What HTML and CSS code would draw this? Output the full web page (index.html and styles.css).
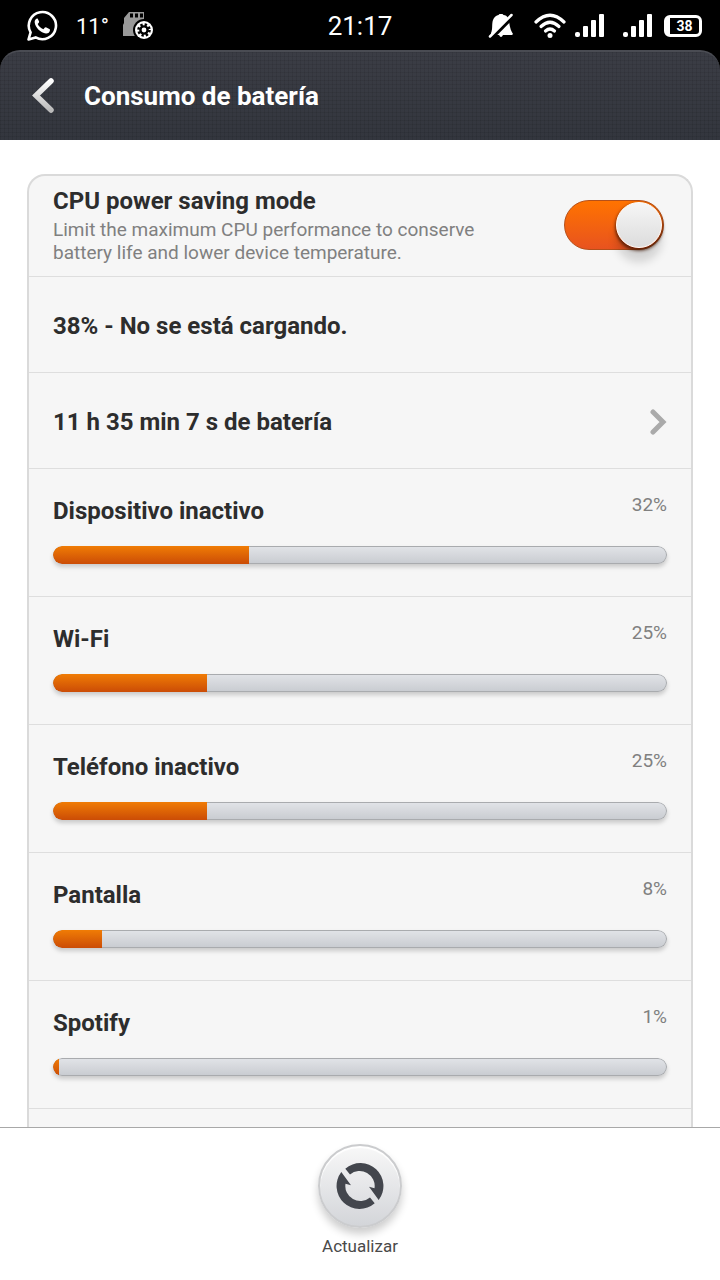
FILE: index.html
```html
<!DOCTYPE html>
<html lang="es">
<head>
    <meta charset="UTF-8">
    <meta name="viewport" content="width=device-width, initial-scale=1.0">
    <title>Consumo de batería</title>
    <link rel="stylesheet" href="styles.css">
</head>
<body>
    <div class="top">
        <div class="status">
            <div class="status-left">
                <svg width="32" height="32" viewBox="0 0 32 32">
                    <path d="M2.500 29.500 L4.600 22.400 A13.600 13.600 0 1 1 9.600 27.400 Z" fill="none" stroke="#fff" stroke-width="2.600" stroke-linejoin="round"/>
                    <path d="M11 8.500c-1.500.5-2.500 2-2.300 4 .6 5 6 10.500 11.300 11 2 .1 3.800-1.200 4-3.300l-.2-1-3.900-2-1 .2-1.500 1.900c-2.700-1-4.600-2.900-5.700-5.200l1.300-1.700.1-.9-1.500-3z" fill="#fff"/>
                </svg>
                <span class="temp">11°</span>
                <svg width="32" height="30" viewBox="0 0 32 30">
                    <path d="M7 1h15v24H1V14l1-2V7z" fill="#999"/>
                    <path d="M8 2.500h3v4H8zM13 2.500h3v4h-3zM18 2.500h3v4h-3z" fill="#000"/>
                    <circle cx="22" cy="19" r="11" fill="#000"/>
                    <circle cx="22" cy="19" r="9" fill="#fff"/>
                    <circle cx="22" cy="19" r="5.500" fill="none" stroke="#000" stroke-width="2.600" stroke-dasharray="2.300 2.020"/>
                    <circle cx="22" cy="19" r="3.600" fill="none" stroke="#000" stroke-width="2.400"/>
                </svg>
            </div>
            <time class="clock">21:17</time>
            <div class="status-right">
                <svg width="26" height="26" viewBox="0 0 26 26">
                    <path d="M3 20 C5 16 3.500 11 5 7 C6 4 8.500 2.500 10.500 2 L11.500 1 H14.500 L15.500 2 C17.500 2.300 19 3 20 5 C22 10 21 15 25 21 L24 22 H15 Q13 26 11 22 H3 Z" fill="#fff"/>
                    <path d="M2.500 26 L26 2.500" stroke="#000" stroke-width="4"/>
                    <path d="M2 23.500 L23.500 2" stroke="#fff" stroke-width="2.500" stroke-linecap="round"/>
                </svg>
                <svg class="wifi" width="32" height="26" viewBox="0 0 32 26" fill="none" stroke="#fff" stroke-width="3.200" stroke-linecap="round">
                    <path d="M2 9 Q16 -4.500 30 9"/>
                    <path d="M7 13.500 Q16 5 25 13.500"/>
                    <path d="M11.500 18 Q16 14 20.500 18"/>
                    <circle cx="16" cy="22.500" r="2.500" fill="#fff" stroke="none"/>
                </svg>
                <svg width="30" height="24" viewBox="0 0 30 24" fill="#fff">
                    <rect x="1" y="18" width="5" height="5" rx="2"/>
                    <rect x="9" y="12" width="5" height="11" rx="1"/>
                    <rect x="17" y="6" width="5" height="17" rx="1"/>
                    <rect x="25" y="0" width="5" height="23" rx="1"/>
                </svg>
                <svg class="second" width="30" height="24" viewBox="0 0 30 24" fill="#fff">
                    <rect x="1" y="18" width="5" height="5" rx="2"/>
                    <rect x="9" y="12" width="5" height="11" rx="1"/>
                    <rect x="17" y="6" width="5" height="17" rx="1"/>
                    <rect x="25" y="0" width="5" height="23" rx="1"/>
                </svg>
                <span class="battery">38</span>
            </div>
        </div>

        <header class="header">
            <button class="back" type="button" aria-label="Atrás">
                <svg width="24" height="38" viewBox="0 0 24 38">
                    <defs>
                        <linearGradient id="arrow" x1="0" y1="0" x2="0" y2="1">
                            <stop offset="0" stop-color="#fff"/>
                            <stop offset="1" stop-color="#bbb"/>
                        </linearGradient>
                    </defs>
                    <path d="M21 4 L6 18.500 L21 33" fill="none" stroke="url(#arrow)" stroke-width="5.500" stroke-linecap="round"/>
                </svg>
            </button>
            <h1>Consumo de batería</h1>
        </header>
    </div>

    <main class="content">
        <div class="card">
            <div class="row row-cpu">
                <label for="cpu">
                    <span class="name">CPU power saving mode</span>
                    <span class="note">Limit the maximum CPU performance to conserve battery life and lower device temperature.</span>
                </label>
                <input class="switch" type="checkbox" id="cpu" checked>
            </div>
            <div class="row">
                <span class="name">38% - No se está cargando.</span>
            </div>
            <a class="row" href="#">
                <span class="name">11 h 35 min 7 s de batería</span>
                <svg width="18" height="26" viewBox="0 0 18 26">
                    <path d="M4 3 L14 13 L4 23" fill="none" stroke="#aaa" stroke-width="5" stroke-linecap="round"/>
                </svg>
            </a>
            <div class="usage">
                <div class="usage-top">
                    <label class="name" for="p1">Dispositivo inactivo</label>
                    <span class="percent">32%</span>
                </div>
                <progress id="p1" value="32" max="100"></progress>
            </div>
            <div class="usage">
                <div class="usage-top">
                    <label class="name" for="p2">Wi-Fi</label>
                    <span class="percent">25%</span>
                </div>
                <progress id="p2" value="25" max="100"></progress>
            </div>
            <div class="usage">
                <div class="usage-top">
                    <label class="name" for="p3">Teléfono inactivo</label>
                    <span class="percent">25%</span>
                </div>
                <progress id="p3" value="25" max="100"></progress>
            </div>
            <div class="usage">
                <div class="usage-top">
                    <label class="name" for="p4">Pantalla</label>
                    <span class="percent">8%</span>
                </div>
                <progress id="p4" value="8" max="100"></progress>
            </div>
            <div class="usage">
                <div class="usage-top">
                    <label class="name" for="p5">Spotify</label>
                    <span class="percent">1%</span>
                </div>
                <progress id="p5" value="1" max="100"></progress>
            </div>
        </div>
    </main>

    <footer class="footer">
        <button class="refresh" type="button">
            <span class="refresh-circle">
                <svg width="48" height="48" viewBox="0 0 48 48">
                    <g fill="#43464d">
                        <path d="M9.300 6.700 A23 23 0 0 1 42.700 38 L33 24.700 L38.500 26.300 A15 15 0 0 0 14 12.500 Z"/>
                        <path d="M38.700 41.300 A23 23 0 0 1 5.300 10 L15 23.300 L9.500 21.700 A15 15 0 0 0 34 35.500 Z"/>
                    </g>
                </svg>
            </span>
            <span>Actualizar</span>
        </button>
    </footer>
</body>
</html>
```
FILE: styles.css
```css
* {
    box-sizing: border-box;
}
body {
    margin: 0;
    height: 100vh;
    display: flex;
    flex-direction: column;
    font-family: Roboto, sans-serif;
    background: #fff;
    color: #2d2d2d;
}
svg {
    display: block;
}

/* status bar */
.top {
    background: #000;
    color: #fff;
}
.status {
    height: 50px;
    padding: 2px 18px 0;
    display: grid;
    grid-template-columns: 1fr auto 1fr;
    align-items: center;
}
.status-left, .status-right {
    display: flex;
    align-items: center;
}
.status-left {
    padding-left: 8px;
}
.status-right {
    justify-content: flex-end;
}
.temp {
    margin: 0 13px 0 18px;
    font-size: 22px;
}
.clock {
    font-size: 26px;
}
.wifi {
    margin: 0 8px 0 20px;
}
.second {
    margin: 0 12px 0 18px;
}
.battery {
    width: 38px;
    height: 22px;
    border: 3px solid #fff;
    border-left-width: 6px;
    border-radius: 6px;
    font-size: 14px;
    font-weight: bold;
    line-height: 16px;
    text-align: center;
}

/* title bar */
.header {
    height: 90px;
    padding: 0 30px;
    display: flex;
    align-items: center;
    gap: 30px;
    border-top: 2px solid #4a4c53;
    border-radius: 20px 20px 0 0;
    background:
        repeating-linear-gradient(90deg, rgba(0, 0, 0, 0.08) 0 1px, transparent 1px 4px),
        repeating-linear-gradient(rgba(0, 0, 0, 0.08) 0 1px, transparent 1px 4px),
        linear-gradient(#3b3d45, #33363e);
}
.header h1 {
    margin: 0;
    font-size: 26px;
    font-weight: bold;
}
.back {
    padding: 0;
    border: none;
    background: none;
    cursor: pointer;
}

/* list */
.content {
    flex: 1;
    min-height: 0;
    padding: 34px 27px 0;
    display: flex;
    flex-direction: column;
    overflow: hidden;
}
.card {
    flex: 1;
    border: 2px solid #dadada;
    border-bottom: none;
    border-radius: 18px 18px 0 0;
    background: #f6f6f6;
}
.row {
    height: 96px;
    padding: 2px 24px 0;
    display: flex;
    align-items: center;
    justify-content: space-between;
    border-bottom: 1px solid #dedede;
    color: inherit;
    text-decoration: none;
}
.row-cpu {
    height: 101px;
    padding: 0 27px 2px 24px;
}
.row-cpu label {
    max-width: 460px;
}
.row-cpu .note {
    padding-top: 2px;
}
.name {
    display: block;
    font-size: 24px;
    line-height: 30px;
    font-weight: bold;
}
.note {
    display: block;
    font-size: 19px;
    line-height: 23px;
    color: #808080;
}
.switch {
    appearance: none;
    width: 100px;
    height: 50px;
    margin: 0;
    padding: 1px;
    border: 1px solid #b5501a;
    border-radius: 25px;
    background: linear-gradient(#ff7300, #e8531f);
    display: flex;
    align-items: center;
    cursor: pointer;
}
.switch:checked {
    justify-content: flex-end;
}
.switch::before {
    content: "";
    box-sizing: border-box;
    width: 46px;
    height: 46px;
    border-radius: 50%;
    background: linear-gradient(#f6f6f6, #dcdcdc);
    border: 1px solid #fff;
    box-shadow: 0 2px 3px 1px rgba(60, 20, 0, 0.7), 0 14px 10px rgba(0, 0, 0, 0.15);
}
.usage {
    height: 128px;
    padding: 27px 24px 0;
    border-bottom: 1px solid #dedede;
}
.usage-top {
    display: flex;
    justify-content: space-between;
}
.percent {
    font-size: 19px;
    line-height: 18px;
    color: #808080;
}
progress {
    appearance: none;
    display: block;
    width: 100%;
    height: 18px;
    margin-top: 20px;
    border-radius: 9px;
    overflow: hidden;
    border: none;
    filter: drop-shadow(0 3px 2px rgba(0, 0, 0, 0.18));
}
progress::-webkit-progress-bar {
    background: linear-gradient(#e2e4e8, #c8cbd0);
    border-radius: 9px;
    box-shadow: inset 0 0 0 1px #a9abae;
    overflow: hidden;
}
progress::-webkit-progress-value {
    background: linear-gradient(#f07c05, #cb4c06);
}

/* bottom bar */
.footer {
    height: 153px;
    padding-top: 16px;
    display: flex;
    justify-content: center;
    align-items: flex-start;
    border-top: 1px solid #a8a8a8;
    background: #fff;
}
.refresh {
    padding: 0;
    border: none;
    background: none;
    display: flex;
    flex-direction: column;
    align-items: center;
    gap: 8px;
    font-family: inherit;
    font-size: 17px;
    color: #4a4a4a;
    cursor: pointer;
}
.refresh-circle {
    width: 84px;
    height: 84px;
    border: 2px solid #cbccce;
    border-radius: 50%;
    display: grid;
    place-items: center;
    background: linear-gradient(#f8f8f8, #d3d5d9);
    box-shadow: 0 6px 8px rgba(0, 0, 0, 0.2), inset 0 2px 1px #fff;
}
```
